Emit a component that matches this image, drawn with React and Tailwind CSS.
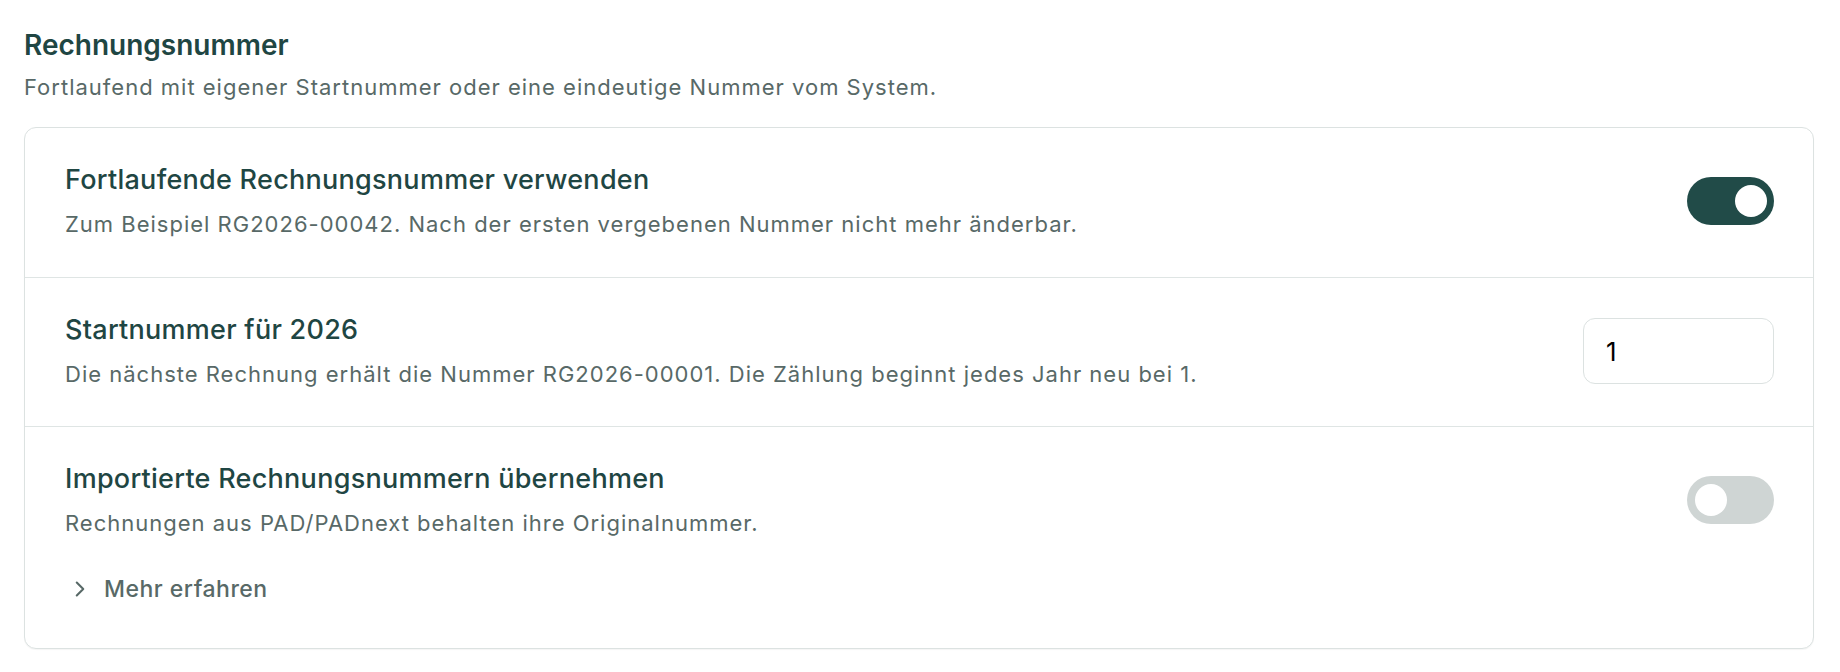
import React from "react";
import { ChevronRight } from "lucide-react";

function Toggle({ on }) {
  return (
    <div
      className={
        on
          ? "flex h-[48px] w-[87px] shrink-0 items-center justify-end rounded-full bg-[#214b48] px-[7px]"
          : "flex h-[48px] w-[87px] shrink-0 items-center justify-start rounded-full bg-[#cfd5d4] px-[8px]"
      }
    >
      <div className="h-[32px] w-[32px] rounded-full bg-white" />
    </div>
  );
}

export default function App() {
  return (
    <div className="h-[672px] w-[1840px] bg-white pl-[24px] pr-[26px] pt-[27px] font-['Inter',sans-serif]">
      <h2 className="text-[28px] font-semibold leading-[36px] text-[#1f4643]">
        Rechnungsnummer
      </h2>
      <p className="mt-[8px] text-[22px] leading-[32px] tracking-[1px] text-[#586967]">
        Fortlaufend mit eigener Startnummer oder eine eindeutige Nummer vom System.
      </p>

      <div className="mt-[24px] rounded-[12px] border border-[#dce2e1] bg-white shadow-[0_1px_1px_rgba(0,0,0,0.04)]">
        {/* Row 1 */}
        <div className="flex items-center justify-between border-b border-[#dfe5e4] pb-[37px] pl-[40px] pr-[39px] pt-[34px]">
          <div>
            <div className="text-[27px] font-medium leading-[36px] tracking-[0.27px] text-[#1f4643]">
              Fortlaufende Rechnungsnummer verwenden
            </div>
            <div className="mt-[10px] text-[22px] leading-[32px] tracking-[1px] text-[#586967]">
              Zum Beispiel RG2026-00042. Nach der ersten vergebenen Nummer nicht mehr änderbar.
            </div>
          </div>
          <Toggle on />
        </div>

        {/* Row 2 */}
        <div className="flex items-center justify-between border-b border-[#dfe5e4] pb-[36px] pl-[40px] pr-[39px] pt-[34px]">
          <div>
            <div className="text-[27px] font-medium leading-[36px] tracking-[0.27px] text-[#1f4643]">
              Startnummer für 2026
            </div>
            <div className="mt-[10px] text-[22px] leading-[32px] tracking-[1px] text-[#586967]">
              Die nächste Rechnung erhält die Nummer RG2026-00001. Die Zählung beginnt jedes Jahr neu bei 1.
            </div>
          </div>
          <input
            type="text"
            defaultValue="1"
            className="h-[66px] w-[191px] shrink-0 rounded-[12px] border border-[#dce2e1] bg-white pl-[22px] text-[26px] text-black outline-none"
          />
        </div>

        {/* Row 3 */}
        <div className="pb-[43px] pl-[40px] pr-[39px] pt-[34px]">
          <div className="flex items-center justify-between">
            <div>
              <div className="text-[27px] font-medium leading-[36px] tracking-[0.27px] text-[#1f4643]">
                Importierte Rechnungsnummern übernehmen
              </div>
              <div className="mt-[10px] text-[22px] leading-[32px] tracking-[1px] text-[#586967]">
                Rechnungen aus PAD/PADnext behalten ihre Originalnummer.
              </div>
            </div>
            <Toggle on={false} />
          </div>
          <div className="mt-[34px] flex items-center gap-[11px] text-[#586967]">
            <ChevronRight size={26} strokeWidth={1.9} className="ml-[2px]" />
            <span className="text-[23px] font-medium leading-[32px] tracking-[0.5px]">Mehr erfahren</span>
          </div>
        </div>
      </div>
    </div>
  );
}
